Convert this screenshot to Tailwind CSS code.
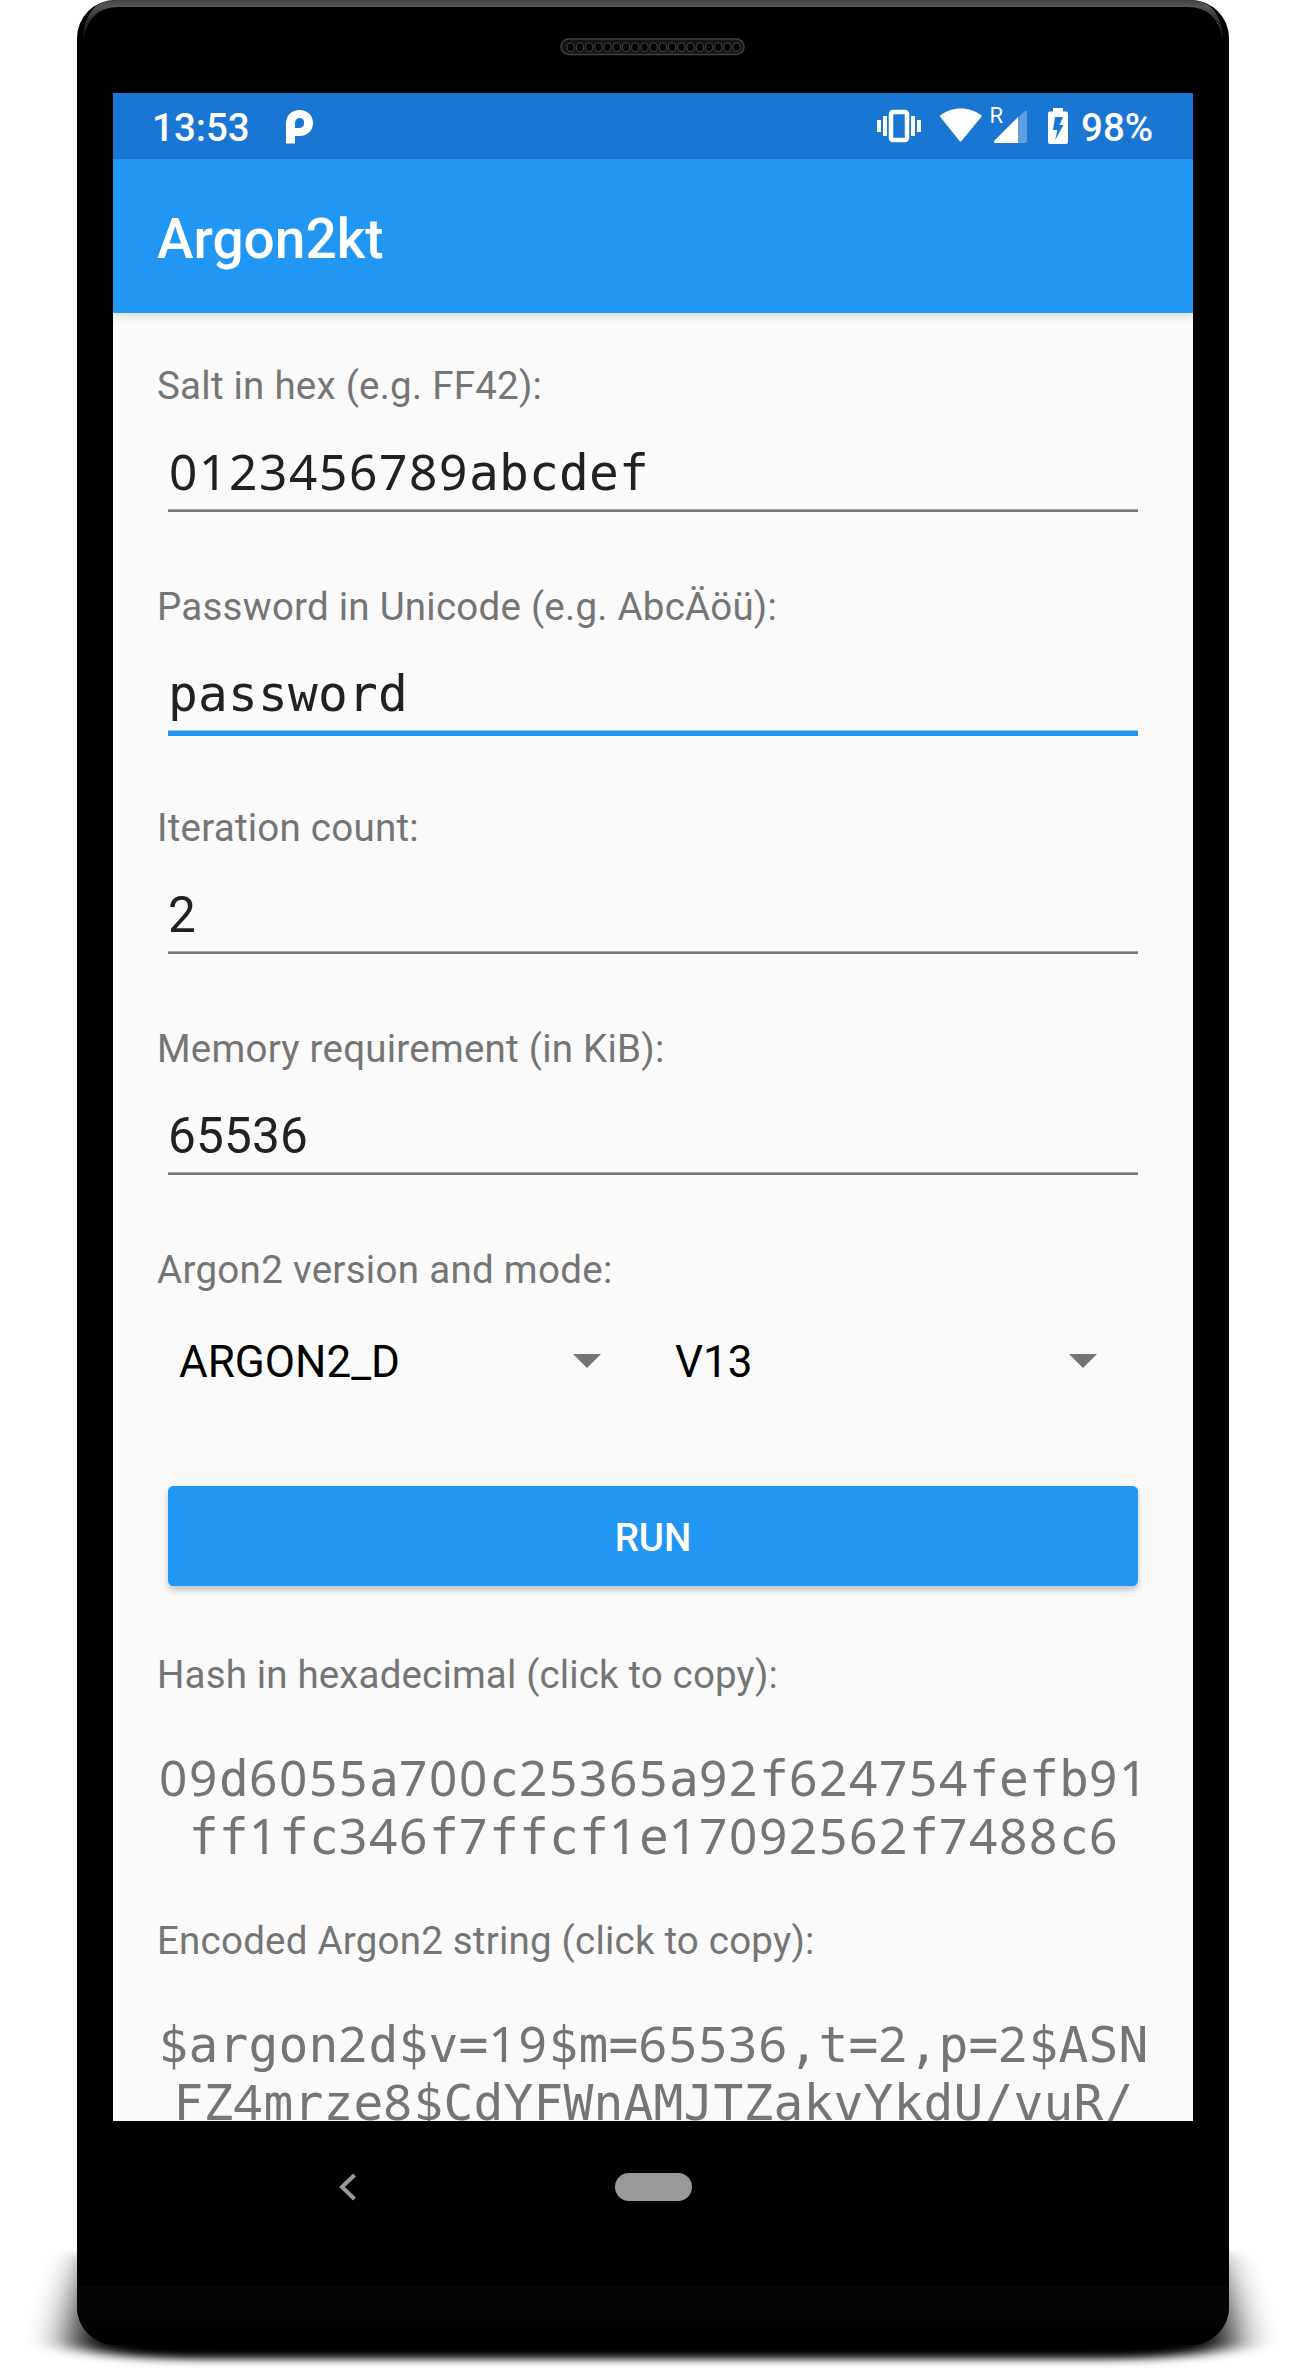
<!DOCTYPE html>
<html lang="en">
<head>
<meta charset="utf-8">
<title>Argon2kt</title>
<script src="https://cdn.jsdelivr.net/npm/@tailwindcss/browser@4"></script>
</head>
<body class="bg-white">
<div class="relative h-[2370px] w-[1305px] overflow-hidden bg-white font-['Roboto',sans-serif]">
  <!-- drop shadow under the phone -->
  <svg class="absolute left-0 top-[2200px]" width="1305" height="170" viewBox="0 2200 1305 170">
    <defs>
      <filter id="soft" x="-10%" y="-60%" width="120%" height="220%"><feGaussianBlur stdDeviation="22 4"/></filter>
    </defs>
    <path filter="url(#soft)" d="M98 2254H1207C1217 2275 1229 2310 1233 2344Q1210 2357 1120 2359H185Q95 2357 72 2344C76 2310 88 2275 98 2254Z" fill="#000"/>
  </svg>

  <!-- phone body -->
  <div class="relative ml-[77px] flex h-[2345px] w-[1152px] flex-col overflow-hidden rounded-[38px] bg-black">
    <div class="h-[93px] shrink-0">
      <svg width="1152" height="93" viewBox="0 0 1152 93">
        <defs>
          <linearGradient id="rim" x1="0" y1="0" x2="0" y2="40" gradientUnits="userSpaceOnUse">
            <stop offset="0" stop-color="#424242"/><stop offset=".16" stop-color="#545454"/><stop offset=".4" stop-color="#3a3a3a"/><stop offset="1" stop-color="#000"/>
          </linearGradient>
        </defs>
        <path d="M5 40Q9 0 38 0H1114Q1143 0 1147 40H1145Q1141 7 1110 7H42Q11 7 7 40Z" fill="url(#rim)"/>
        <rect x="484" y="39" width="183" height="15.500" rx="7.750" fill="#151515" stroke="#404040" stroke-width="1.500"/>
        <g id="holes" fill="#000" stroke="#484848" stroke-width="1"></g>
      </svg>
    </div>

    <!-- screen -->
    <div class="ml-[36px] flex h-[2028px] w-[1080px] shrink-0 flex-col overflow-hidden bg-[#fafafa]">
      <div class="flex h-[66px] shrink-0 items-center bg-[#1976d2] text-[38.5px] font-medium text-white">
        <span class="ml-[39px] w-[98px] pt-[3px] leading-[66px]">13:53</span>
        <svg class="ml-[36px]" width="28" height="66" viewBox="286 93 28 66"><path fill="#fff" fill-rule="evenodd" d="M286 143.500V124C286 115.500 291.500 110 299.500 110S313 115.500 313 123S307.500 136 299.500 136H295V143.500ZM295 128H299.500A4.600 5 0 1 0 295 123.500Z"/></svg>
        <svg class="ml-[563px] shrink-0" width="44" height="66" viewBox="877 93 44 66"><rect x="891" y="112" width="16" height="28" rx="2" fill="none" stroke="#fff" stroke-width="4.500"/><path fill="#fff" d="M877 120h4v12h-4zM883 116h4v20h-4zM911 116h4v20h-4zM917 120h4v12h-4z"/></svg>
        <svg class="ml-[18px] shrink-0" width="43" height="66" viewBox="939 93 43 66"><path fill="#fff" d="M939.600 116C951 106 970.500 106 982 116L961.500 141Q960.500 142 959.500 141Z"/></svg>
        <svg class="ml-[8px] shrink-0" width="38" height="66" viewBox="990 93 38 66"><text x="989.500" y="123" font-size="22" font-weight="400" fill="#fff">R</text><path fill="#fff" fill-opacity=".3" d="M1018 118L1025 111Q1027 109.500 1027 112V141Q1027 143 1025 143H1018Z"/><path fill="#fff" d="M1018 117V143H995Q993 142.500 994.500 140.500Z"/></svg>
        <svg class="ml-[20px] shrink-0" width="20" height="66" viewBox="1048 93 20 66"><path fill="#fff" fill-rule="evenodd" d="M1053 108H1063V111.500H1066Q1068 111.500 1068 113.500V142Q1068 144 1066 144H1050Q1048 144 1048 142V113.500Q1048 111.500 1050 111.500H1053ZM1055 117L1053 130H1057.500L1055 140.500L1063.500 125H1059.500L1063 117Z"/></svg>
        <span class="ml-[13px] pt-[3px] leading-[66px]">98%</span>
      </div>
      <header class="relative h-[154px] shrink-0 bg-[#2196f3] pl-[44px] pt-[47px] text-[55px] font-medium leading-[66px] text-white shadow-[0_3px_9px_rgba(0,0,0,0.14)]">Argon2kt</header>

      <main class="flex flex-col px-[44px] pt-[47px] text-[#757575]">
        <div class="h-[221px]">
          <label class="block text-[38.5px] leading-[52px] tracking-[0.24px]">Salt in hex (e.g. FF42):</label>
          <div class="mx-[11px] h-[100px] border-b-2 border-[#757575] pt-[28px] text-[49.5px] leading-[66px] text-[#212121] shadow-[inset_0_-1px_#a8a8a8]"><span class="mono whitespace-nowrap pl-px font-['DejaVu_Sans_Mono',monospace] tracking-[0.2px]">0123456789abcdef</span></div>
        </div>
        <div class="h-[221px]">
          <label class="block text-[38.5px] leading-[52px] tracking-[0.24px]">Password in Unicode (e.g. AbcÄöü):</label>
          <div class="mx-[11px] h-[103px] border-b-5 border-[#2196f3] pt-[28px] text-[49.5px] leading-[66px] text-[#212121] shadow-[inset_0_-1px_#8cc8f8]"><span class="mono whitespace-nowrap font-['DejaVu_Sans_Mono',monospace] tracking-[0.2px]">password</span></div>
        </div>
        <div class="h-[221px]">
          <label class="block text-[38.5px] leading-[52px] tracking-[0.24px]">Iteration count:</label>
          <div class="mx-[11px] h-[100px] border-b-2 border-[#757575] pt-[28px] text-[49.5px] leading-[66px] text-[#212121] shadow-[inset_0_-1px_#a8a8a8]">2</div>
        </div>
        <div class="h-[221px]">
          <label class="block text-[38.5px] leading-[52px] tracking-[0.24px]">Memory requirement (in KiB):</label>
          <div class="mx-[11px] h-[100px] border-b-2 border-[#757575] pt-[28px] text-[49.5px] leading-[66px] tracking-[0.2px] text-[#212121] shadow-[inset_0_-1px_#a8a8a8]">65536</div>
        </div>
        <label class="block text-[38.5px] leading-[52px] tracking-[0.3px]">Argon2 version and mode:</label>
        <div class="mt-[33px] grid h-[66px] grid-cols-2 text-[44px] leading-[66px] text-black">
          <div class="flex items-center justify-between pl-[22px] pr-[52px]">ARGON2_D<svg class="mb-[3px]" width="28" height="14" viewBox="0 0 28 14"><path d="M0 0H28L14 14Z" fill="#757575"/></svg></div>
          <div class="flex items-center justify-between pl-[22px] pr-[52px]">V13<svg class="mb-[3px]" width="28" height="14" viewBox="0 0 28 14"><path d="M0 0H28L14 14Z" fill="#757575"/></svg></div>
        </div>
        <button class="mx-[11px] mt-[91px] h-[100px] rounded-[5.5px] bg-[#2196f3] pt-[3px] text-[38.5px] font-medium text-white shadow-[0_4px_6px_rgba(0,0,0,0.22)]">RUN</button>
        <div class="mt-[63px] text-[38.5px] leading-[52px] tracking-[0.15px]">Hash in hexadecimal (click to copy):</div>
        <div class="mono -mx-[11px] mt-[49px] flex flex-col items-center whitespace-nowrap pl-[2px] font-['DejaVu_Sans_Mono',monospace] text-[49.5px] leading-[58px] tracking-[0.2px]">
          <span>09d6055a700c25365a92f624754fefb91</span>
          <span>ff1fc346f7ffcf1e17092562f7488c6</span>
        </div>
        <div class="mt-[49px] text-[38.5px] leading-[52px] tracking-[0.22px]">Encoded Argon2 string (click to copy):</div>
        <div class="mono -mx-[11px] mt-[49px] flex flex-col items-center whitespace-nowrap pl-px font-['DejaVu_Sans_Mono',monospace] text-[49.5px] leading-[58px] tracking-[0.2px]">
          <span>$argon2d$v=19$m=65536,t=2,p=2$ASN</span>
          <span>FZ4mrze8$CdYFWnAMJTZakvYkdU/vuR/</span>
        </div>
      </main>
    </div>

    <!-- navigation bar -->
    <div class="flex h-[132px] shrink-0 items-center">
      <svg class="ml-[261px]" width="20" height="30" viewBox="0 0 20 30"><path d="M16.500 3L4 15L16.500 27" fill="none" stroke="#999" stroke-width="4"/></svg>
      <div class="ml-[257px] h-[28px] w-[77px] rounded-full bg-[#999]"></div>
    </div>
    <div class="mt-[34px] h-[58px] shrink-0 bg-linear-to-b from-[#060606] via-[#050505] to-black"></div>
  </div>
</div>

<script>
  // speaker grille
  const holes = document.getElementById('holes');
  for (let i = 0; i < 19; i++) {
    const c = document.createElementNS('http://www.w3.org/2000/svg', 'ellipse');
    c.setAttribute('cx', 493.700 + i * 9.220);
    c.setAttribute('cy', 47.200);
    c.setAttribute('rx', 3.600);
    c.setAttribute('ry', 4.300);
    holes.appendChild(c);
  }
  // digits in fixed-pitch text use plain figures, spaced to the same pitch as the letters
  document.querySelectorAll('span.mono, .mono > span').forEach(el => {
    el.innerHTML = el.textContent.replace(/\d+/g, d => `<span class="font-['Noto_Sans',sans-serif] leading-[0] tracking-[1.69px]">${d}</span>`);
  });
</script>
</body>
</html>
